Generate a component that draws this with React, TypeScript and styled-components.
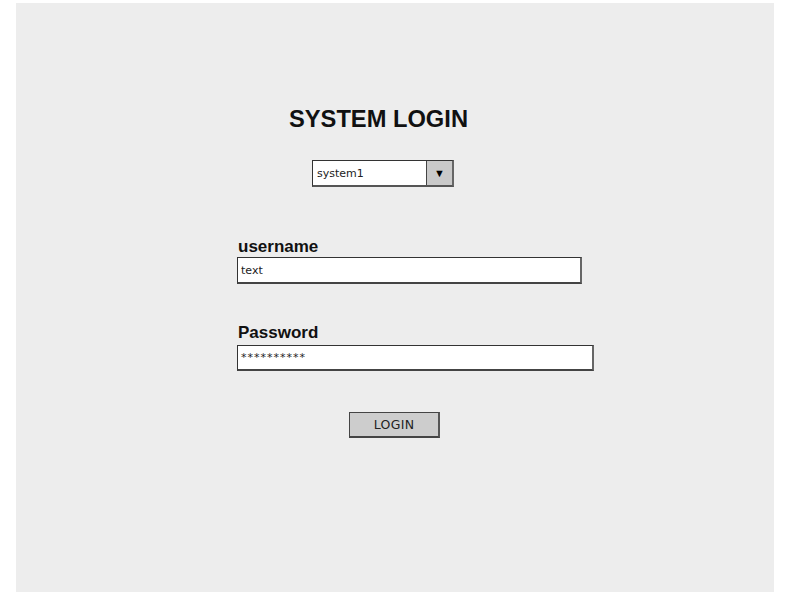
import styled, { createGlobalStyle } from "styled-components";

const GlobalStyle = createGlobalStyle`
  html, body {
    margin: 0;
    padding: 0;
    background: #ffffff;
  }
  body {
    font-family: "Liberation Sans", Arial, sans-serif;
  }
`;

const Page = styled.div`
  padding: 3px 12px 11px 16px;
`;

const Panel = styled.div`
  width: 758px;
  height: 589px;
  background: #ededed;
  box-sizing: border-box;
  padding: 102px 0 0 221px;
  display: flex;
  flex-direction: column;
  align-items: flex-start;
`;

const Title = styled.h1<{ $indent: number }>`
  margin: 0 0 0 ${({ $indent }) => $indent}px;
  font-family: "Liberation Sans", Arial, sans-serif;
  font-size: 23.7px;
  line-height: 28px;
  font-weight: 700;
  color: #111;
`;

const Select = styled.div<{ $indent: number }>`
  margin: 27px 0 0 ${({ $indent }) => $indent}px;
  width: 142px;
  height: 27px;
  box-sizing: border-box;
  display: flex;
  border: 1px solid #333;
  border-right: 2px solid #666;
  border-bottom: 2px solid #555;
  background: #fff;
`;

const SelectValue = styled.div`
  flex: 1;
  display: flex;
  align-items: center;
  padding-left: 4px;
  font-family: "DejaVu Sans", sans-serif;
  font-size: 11px;
  color: #222;
`;

const SelectArrow = styled.div`
  width: 25px;
  border-left: 1px solid #444;
  background: #c9c9c9;
  display: flex;
  align-items: center;
  justify-content: center;
  font-size: 11px;
  color: #000;
`;

const Field = styled.div<{ $top: number }>`
  margin-top: ${({ $top }) => $top}px;
  display: flex;
  flex-direction: column;
`;

const Label = styled.label<{ $gap: number }>`
  font-family: "Liberation Sans", Arial, sans-serif;
  font-size: 17px;
  line-height: 18px;
  font-weight: 700;
  color: #111;
  padding-left: 1px;
  margin-bottom: ${({ $gap }) => $gap}px;
`;

const Input = styled.div<{ $width: number; $height: number; $spacing?: number }>`
  width: ${({ $width }) => $width}px;
  height: ${({ $height }) => $height}px;
  box-sizing: border-box;
  background: #fff;
  border: 1px solid #333;
  border-right: 2px solid #666;
  border-bottom: 2px solid #444;
  display: flex;
  align-items: center;
  padding-left: 3px;
  font-family: "DejaVu Sans", sans-serif;
  font-size: 11px;
  letter-spacing: ${({ $spacing = 0 }) => $spacing}px;
  color: #222;
`;

const Button = styled.div<{ $indent: number }>`
  margin: 41px 0 0 ${({ $indent }) => $indent}px;
  width: 91px;
  height: 26px;
  box-sizing: border-box;
  background: #cdcdcd;
  border: 1px solid #444;
  border-right: 2px solid #555;
  border-bottom: 2px solid #444;
  display: flex;
  align-items: center;
  justify-content: center;
  font-family: "DejaVu Sans", sans-serif;
  font-size: 12.5px;
  letter-spacing: 0.3px;
  color: #222;
`;

export default function App() {
  return (
    <>
      <GlobalStyle />
      <Page>
        <Panel>
          <Title $indent={52}>SYSTEM LOGIN</Title>
          <Select $indent={75}>
            <SelectValue>system1</SelectValue>
            <SelectArrow>▼</SelectArrow>
          </Select>
          <Field $top={51}>
            <Label $gap={1}>username</Label>
            <Input $width={345} $height={27}>text</Input>
          </Field>
          <Field $top={40}>
            <Label $gap={3}>Password</Label>
            <Input $width={357} $height={26} $spacing={1}>
              **********
            </Input>
          </Field>
          <Button $indent={112}>LOGIN</Button>
        </Panel>
      </Page>
    </>
  );
}
